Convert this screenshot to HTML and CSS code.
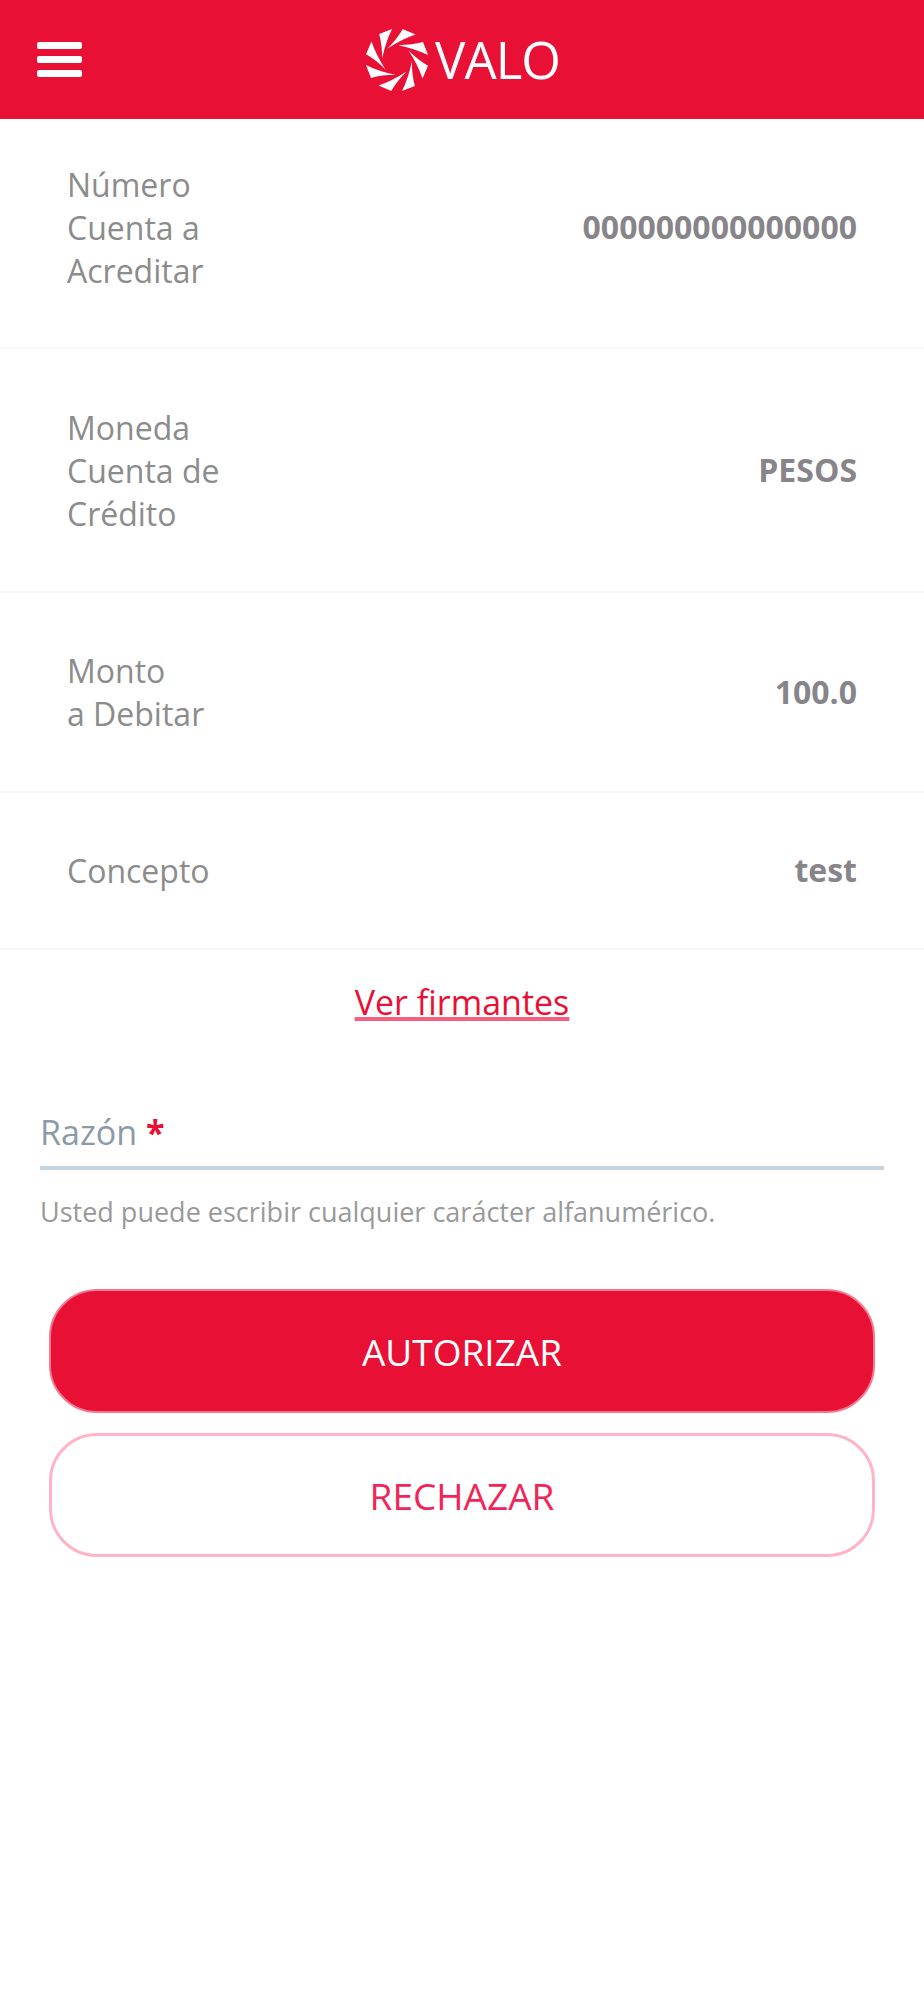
FILE: index.html
```html
<!DOCTYPE html>
<html lang="es">
<head>
    <meta charset="UTF-8">
    <meta name="viewport" content="width=device-width, initial-scale=1.0">
    <title>VALO</title>
    <link rel="stylesheet" href="styles.css">
</head>
<body>

<header class="topbar">
    <div class="menu-icon">
        <span></span>
        <span></span>
        <span></span>
    </div>
    <div class="brand">
        <svg class="brand-mark" viewBox="-33 -33 66 66" width="66" height="66">
            <defs>
                <path id="blade" d="M5.7 -31 L18.5 -25.5 Q5 -21 -9.5 -11.5 Q0.5 -21.5 5.7 -31 Z"/>
            </defs>
            <g fill="#fff">
                <use href="#blade"/>
                <use href="#blade" transform="rotate(45)"/>
                <use href="#blade" transform="rotate(90)"/>
                <use href="#blade" transform="rotate(135)"/>
                <use href="#blade" transform="rotate(180)"/>
                <use href="#blade" transform="rotate(225)"/>
                <use href="#blade" transform="rotate(270)"/>
                <use href="#blade" transform="rotate(315)"/>
            </g>
        </svg>
        <span class="brand-name">VALO</span>
    </div>
</header>

<div class="detail-list">
    <div class="detail-row row-first">
        <div class="detail-label">Número<br>Cuenta a<br>Acreditar</div>
        <div class="detail-value">000000000000000</div>
    </div>
    <div class="detail-row row-three">
        <div class="detail-label">Moneda<br>Cuenta de<br>Crédito</div>
        <div class="detail-value">PESOS</div>
    </div>
    <div class="detail-row row-two">
        <div class="detail-label">Monto<br>a Debitar</div>
        <div class="detail-value">100.0</div>
    </div>
    <div class="detail-row row-one">
        <div class="detail-label">Concepto</div>
        <div class="detail-value">test</div>
    </div>
</div>

<div class="signers">
    <a href="#">Ver firmantes</a>
</div>

<div class="reason-field">
    <div class="reason-label">Razón <span class="required">*</span></div>
    <div class="reason-hint">Usted puede escribir cualquier carácter alfanumérico.</div>
</div>

<div class="actions">
    <button class="btn btn-primary">AUTORIZAR</button>
    <button class="btn btn-outline">RECHAZAR</button>
</div>

</body>
</html>
```
FILE: styles.css
```css
body {
    font-family: "Open Sans", Arial, sans-serif;
    background-color: #fff;
    margin: 0;
}
.topbar {
    background-color: #e81035;
    height: 119px;
    display: flex;
    align-items: center;
    justify-content: center;
    position: relative;
}
.menu-icon {
    position: absolute;
    left: 37px;
    top: 42px;
    width: 45px;
    display: flex;
    flex-direction: column;
    gap: 7px;
}
.menu-icon span {
    display: block;
    height: 7px;
    border-radius: 2px;
    background-color: #fff;
}
.brand {
    display: flex;
    align-items: center;
    gap: 5px;
    color: #fff;
}
.brand-mark {
    display: block;
}
.brand-name {
    font-size: 51px;
    line-height: 60px;
    letter-spacing: -1px;
    margin-top: -2px;
}
.detail-row {
    display: flex;
    align-items: center;
    justify-content: space-between;
    padding: 0 67px;
    border-bottom: 2px solid #f7f7f7;
    box-sizing: border-box;
}
.row-first {
    height: 230px;
    padding-bottom: 12px;
}
.row-three {
    height: 244px;
}
.row-two {
    height: 200px;
}
.row-one {
    height: 157px;
}
.detail-label {
    font-size: 32px;
    line-height: 43px;
    color: #8c8c8c;
}
.detail-value {
    font-size: 32px;
    font-weight: 700;
    color: #88858a;
    padding-bottom: 2px;
}
.signers {
    text-align: center;
    padding-top: 29px;
}
.signers a {
    font-size: 34px;
    line-height: 46px;
    color: #e81035;
    text-decoration-color: #f4607e;
    text-decoration-thickness: 4px;
}
.reason-field {
    margin: 84px 40px 0;
}
.reason-label {
    font-size: 34px;
    line-height: 46px;
    padding-bottom: 11px;
    color: #8a9aa6;
    border-bottom: 4px solid #c6d4df;
}
.required {
    color: #e81035;
    font-weight: 700;
}
.reason-hint {
    margin-top: 24px;
    font-size: 27px;
    line-height: 36px;
    color: #999;
}
.actions {
    margin: 59px 49px 0;
    display: flex;
    flex-direction: column;
    gap: 20px;
}
.btn {
    height: 124px;
    border-radius: 48px;
    font-family: inherit;
    font-size: 37px;
    cursor: pointer;
}
.btn-primary {
    background-color: #e81035;
    border: 2px solid #f27a90;
    color: #fff;
}
.btn-outline {
    background-color: #fff;
    border: 3px solid #ffb3c4;
    color: #f0255a;
}
```
